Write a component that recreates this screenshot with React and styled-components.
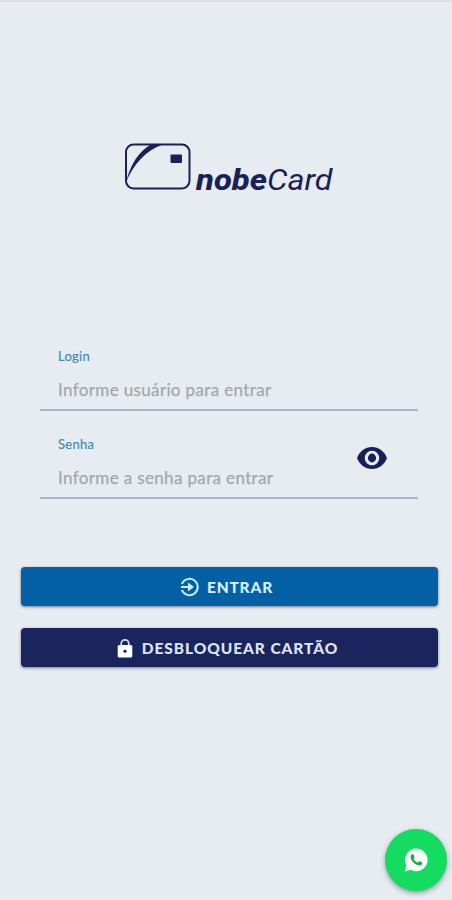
import React from 'react';
import styled, { createGlobalStyle } from 'styled-components';

const GlobalStyle = createGlobalStyle`
  * { box-sizing: border-box; }
  body { margin: 0; background: #e6ecf0; font-family: Lato, "Open Sans", sans-serif; }
`;

const Screen = styled.main`
  display: flex;
  flex-direction: column;
  width: 100%;
  height: 900px;
  overflow: hidden;
  background: #e6ecf0;
  border-top: 2px solid #e1dfe6;
`;

const Brand = styled.header`
  display: flex;
  justify-content: center;
  height: 337px;
  padding: 135px 0 0 6px;
`;

const Form = styled.form`
  display: flex;
  flex-direction: column;
  padding: 0 34px 0 40px;
`;

const Field = styled.div`
  display: flex;
  align-items: flex-end;
  justify-content: space-between;
  height: ${(p) => p.$height}px;
  padding: 0 30px 7px 18px;
  border-bottom: 2px solid #b2b2d2;
`;

const FieldText = styled.label`
  display: flex;
  flex-direction: column;
`;

const Label = styled.span`
  height: 18px;
  line-height: 18px;
  font-size: 13px;
  letter-spacing: 0.25px;
  color: #4689b4;
  -webkit-text-stroke: 0.2px #4689b4;
`;

const Input = styled.input`
  width: 260px;
  height: 24px;
  margin-top: 13px;
  padding: 0;
  border: 0;
  outline: 0;
  background: transparent;
  font: 400 17px/24px Lato, sans-serif;
  letter-spacing: 0.36px;
  &::placeholder { color: #a2a8ac; opacity: 1; -webkit-text-stroke: 0.25px #a2a8ac; }
`;

const EyeButton = styled.button`
  display: flex;
  margin: 0 1px 21px 0;
  padding: 0;
  border: 0;
  background: none;
`;

const Actions = styled.div`
  display: flex;
  flex-direction: column;
  gap: 22px;
  padding: 68px 14px 0 21px;
`;

const Action = styled.button`
  display: flex;
  align-items: center;
  justify-content: center;
  gap: ${(p) => p.$gap}px;
  height: 39px;
  padding: 0 ${(p) => p.$shift}px 0 0;
  border: 0;
  border-radius: 4px;
  background: ${(p) => p.$color};
  box-shadow: 0 1px 3px rgba(20, 25, 65, 0.55);
  color: ${(p) => p.$ink};
  font: 900 15.5px/20px Lato, sans-serif;
  letter-spacing: ${(p) => p.$tracking}px;
`;

const ChatButton = styled.button`
  position: fixed;
  right: 5px;
  bottom: 9px;
  display: flex;
  align-items: center;
  justify-content: center;
  width: 62px;
  height: 62px;
  padding: 0;
  border: 0;
  border-radius: 50%;
  background: #13dc60;
  box-shadow: 0 2px 5px rgba(60, 70, 85, 0.5);
`;

const Logo = () => (
  <svg width="212" height="60" viewBox="0 0 212 60" role="img" aria-label="nobeCard">
    <rect x="3" y="7.5" width="63.5" height="44" rx="7.5" fill="none" stroke="#1b2158" strokeWidth="2" />
    <path d="M3.2 45C7 28 16 14 28 7.5H40C23 13 10 28 3.2 45Z" fill="#1b2158" />
    <rect x="47.5" y="17.5" width="11.5" height="8.5" rx="1" fill="#1b2158" />
    <g fontFamily="Roboto, sans-serif" fontStyle="italic" fontSize="29" fill="#1b2158">
      <text x="73" y="53" fontWeight="800" textLength="71" lengthAdjust="spacingAndGlyphs">nobe</text>
      <text x="144" y="53" fontWeight="400" textLength="65.5" lengthAdjust="spacingAndGlyphs">Card</text>
    </g>
  </svg>
);

const EyeIcon = () => (
  <svg width="30" height="22" viewBox="1 4.5 22 15" preserveAspectRatio="none" fill="#18205c">
    <path d="M12 4.5C7 4.5 2.73 7.61 1 12c1.73 4.39 6 7.5 11 7.5s9.27-3.11 11-7.5c-1.73-4.39-6-7.5-11-7.5zM12 17c-2.9 0-5.3-2.24-5.3-5s2.4-5 5.3-5 5.3 2.24 5.3 5-2.4 5-5.3 5zm0-8a3 3 0 1 0 0 6 3 3 0 0 0 0-6z" />
  </svg>
);

const EnterIcon = () => (
  <svg width="20" height="20" viewBox="0 0 20 20" fill="none" stroke="#c9ecff" strokeWidth="2">
    <path d="M1.9 7A8.2 8.2 0 1 1 1.9 13" />
    <path d="M1 10H10" />
    <path d="M8 5.5L14 10L8 14.5Z" fill="#c9ecff" stroke="none" />
  </svg>
);

const LockIcon = () => (
  <svg width="16" height="20" viewBox="0 0 16 20">
    <path d="M4.2 8V5.6a3.8 3.8 0 0 1 7.6 0V8" fill="none" stroke="#d5dcf3" strokeWidth="1.7" />
    <rect x="0.7" y="7" width="14.6" height="12.5" rx="1.5" fill="#fff" />
    <circle cx="8" cy="13.2" r="1.6" fill="#1b255d" />
  </svg>
);

const ChatIcon = () => (
  <svg width="24" height="24" viewBox="0 0 24 24">
    <path d="M12.3 0.6A11.3 11.3 0 1 1 6.8 21.8L0.7 23.4L2.4 17.5A11.3 11.3 0 0 1 12.3 0.6Z" fill="#f5fff8" />
    <path d="M8.4 6.3C7.5 6.3 6.5 7.5 6.6 8.9C6.9 12.8 11.3 17 15.3 17.3C17 17.4 18.3 16.3 18.2 14.9C18.2 14.4 15.7 13.2 15.2 13.3C14.7 13.4 14.2 14.8 13.7 14.7C12.1 14.2 10.4 12.5 9.6 11C9.4 10.5 10.5 9.9 10.5 9.3C10.4 8.7 9.5 6.5 9.1 6.3Z" fill="#16a650" />
  </svg>
);

export default function App() {
  return (
    <>
      <GlobalStyle />
      <Screen>
        <Brand><Logo /></Brand>
        <Form>
          <Field $height={72}>
            <FieldText>
              <Label>Login</Label>
              <Input placeholder="Informe usuário para entrar" />
            </FieldText>
          </Field>
          <Field $height={88}>
            <FieldText>
              <Label>Senha</Label>
              <Input type="password" placeholder="Informe a senha para entrar" />
            </FieldText>
            <EyeButton type="button" aria-label="Mostrar senha"><EyeIcon /></EyeButton>
          </Field>
        </Form>
        <Actions>
          <Action $color="#0360a5" $ink="#d8f1ff" $gap={7} $shift={6} $tracking={0.8}>
            <EnterIcon /><span>ENTRAR</span>
          </Action>
          <Action $color="#1b255d" $ink="#dee5f9" $gap={9} $shift={4} $tracking={0.93}>
            <LockIcon /><span>DESBLOQUEAR CARTÃO</span>
          </Action>
        </Actions>
        <ChatButton aria-label="WhatsApp"><ChatIcon /></ChatButton>
      </Screen>
    </>
  );
}
